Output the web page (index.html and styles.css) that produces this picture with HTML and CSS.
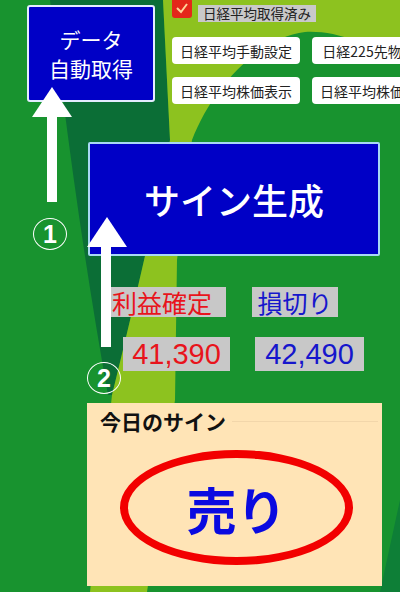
FILE: index.html
```html
<!DOCTYPE html>
<html lang="ja">

<head>
    <meta charset="UTF-8">
    <meta name="viewport" content="width=device-width, initial-scale=1.0">
    <title>サイン</title>
    <link rel="stylesheet" href="styles.css">
</head>

<body>
    <!-- 背景の模様 -->
    <svg class="bg" width="400" height="592" viewBox="0 0 400 592">
        <rect width="400" height="592" fill="#18932f" />
        <path d="M50 0 L163 0 L170 140 Q150 240 112 395 L108 395 Q82 250 62 90 Z" fill="#0b6e36" />
        <path d="M163 0 L400 0 L400 63 C370 44 335 30 305 32 C265 36 215 80 192 140 L177 260 L175 400 L147 592 L90 592 L112 395 Q150 240 170 140 Z" fill="#8dc21f" />
        <path d="M400 500 L400 592 L380 592 Z" fill="#0e7f37" />
    </svg>

    <div class="page">
        <div class="top">
            <button class="data-btn">データ<br>自動取得</button>
            <div class="side">
                <div class="check-row">
                    <span class="check">
                        <svg width="20" height="20" viewBox="0 0 20 20">
                            <polyline points="5,10 9,14 15,6" fill="none" stroke="#ffd49a" stroke-width="2" />
                        </svg>
                    </span>
                    <span class="check-label">日経平均取得済み</span>
                </div>
                <div class="btn-grid">
                    <button class="small-btn">日経平均手動設定</button>
                    <button class="small-btn">日経225先物設定</button>
                    <button class="small-btn">日経平均株価表示</button>
                    <button class="small-btn">日経平均株価取得</button>
                </div>
            </div>
        </div>

        <button class="sign-btn">サイン生成</button>

        <div class="label-row">
            <span class="tag profit">利益確定</span>
            <span class="tag loss">損切り</span>
        </div>
        <div class="value-row">
            <span class="value profit">41,390</span>
            <span class="value loss">42,490</span>
        </div>

        <!-- 今日のサイン -->
        <div class="panel">
            <div class="legend">今日のサイン</div>
            <div class="result">売り</div>
        </div>
    </div>

    <!-- 手順の矢印 -->
    <svg class="arrows" width="400" height="592" viewBox="0 0 400 592">
        <polygon points="52,87 32,117 72,117" fill="#fff" />
        <rect x="47" y="115" width="10" height="87" fill="#fff" />
        <polygon points="107,217 87,247 127,247" fill="#fff" />
        <rect x="101" y="245" width="10" height="102" fill="#fff" />
    </svg>
    <span class="step step1">1</span>
    <span class="step step2">2</span>
</body>

</html>
```

FILE: styles.css
```css
body {
    margin: 0;
    width: 400px;
    height: 592px;
    overflow: hidden;
    position: relative;
    font-family: "Noto Sans CJK JP", sans-serif;
}

.bg {
    position: absolute;
    left: 0;
    top: 0;
    z-index: 0;
}

.page {
    position: relative;
    z-index: 1;
}

button {
    font-family: "Noto Sans CJK JP", sans-serif;
    padding: 0;
    cursor: pointer;
}

/* 上の段 */
.top {
    display: flex;
}

.data-btn {
    flex-shrink: 0;
    margin: 5px 0 0 27px;
    width: 128px;
    height: 97px;
    box-sizing: border-box;
    background-color: #0000c6;
    border: 2px solid #e4ecff;
    border-radius: 3px;
    color: #fff;
    font-size: 21px;
    line-height: 29px;
}

.side {
    flex-shrink: 0;
    margin-left: 17px;
}

.check-row {
    display: flex;
    align-items: flex-start;
    height: 22px;
}

.check {
    width: 20px;
    height: 20px;
    margin-top: -2px;
    background-color: #e4261a;
    border-radius: 3px;
}

.check svg {
    display: block;
}

.check-label {
    margin: 5px 0 0 6px;
    padding: 0 5px;
    height: 17px;
    line-height: 17px;
    background-color: #c9c9c9;
    color: #222;
    font-size: 13.5px;
}

.btn-grid {
    display: grid;
    grid-template-columns: 128px 128px;
    column-gap: 12px;
    row-gap: 13px;
    margin-top: 15px;
}

.small-btn {
    height: 27px;
    background-color: #fff;
    border: none;
    border-radius: 4px;
    color: #222;
    font-size: 14px;
    white-space: nowrap;
}

/* サイン生成 */
.sign-btn {
    display: block;
    margin: 38px 0 0 88px;
    width: 292px;
    height: 114px;
    box-sizing: border-box;
    background-color: #0000c6;
    border: 2px solid #a8d8f4;
    border-radius: 2px;
    color: #fff;
    font-size: 36px;
    font-weight: 500;
}

.label-row,
.value-row {
    display: flex;
}

.label-row {
    margin-top: 31px;
}

.tag {
    height: 30px;
    line-height: 30px;
    background-color: #c8c8c8;
    font-size: 25px;
}

.tag.profit {
    margin-left: 110px;
    width: 116px;
    padding-left: 2px;
    box-sizing: border-box;
}

.tag.loss {
    margin-left: 26px;
    width: 86px;
    text-align: center;
}

.value-row {
    margin-top: 20px;
}

.value {
    height: 34px;
    line-height: 34px;
    background-color: #c8c8c8;
    font-family: "Liberation Sans", Arial, sans-serif;
    font-size: 29px;
    text-align: center;
}

.value.profit {
    margin-left: 123px;
    width: 107px;
}

.value.loss {
    margin-left: 25px;
    width: 109px;
}

.profit {
    color: #e8141c;
}

.loss {
    color: #1616cc;
}

/* 今日のサイン */
.panel {
    margin: 32px 0 0 87px;
    width: 295px;
    height: 183px;
    background-color: #ffe4b6;
}

.legend {
    display: flex;
    align-items: center;
    padding: 5px 4px 0 13px;
    height: 26px;
    font-size: 21px;
    font-weight: bold;
    color: #111;
}

.legend::after {
    content: "";
    flex: 1;
    margin-left: 6px;
    border-top: 1px solid #f2d6aa;
}

.result {
    display: flex;
    align-items: center;
    justify-content: center;
    margin: 16px 0 0 33px;
    width: 233px;
    height: 115px;
    box-sizing: border-box;
    border: 8px solid #f20000;
    border-radius: 50%;
    color: #0a0ae0;
    font-size: 50px;
    font-weight: bold;
}

/* 矢印と番号 */
.arrows {
    position: absolute;
    left: 0;
    top: 0;
    z-index: 2;
}

.step {
    position: absolute;
    z-index: 2;
    width: 32px;
    height: 30px;
    border: 1.5px solid #fff;
    border-radius: 50%;
    color: #fff;
    font-family: "Liberation Sans", Arial, sans-serif;
    font-size: 25px;
    font-weight: bold;
    line-height: 30px;
    text-align: center;
}

.step1 {
    left: 33px;
    top: 218px;
}

.step2 {
    left: 87px;
    top: 362px;
}
```
